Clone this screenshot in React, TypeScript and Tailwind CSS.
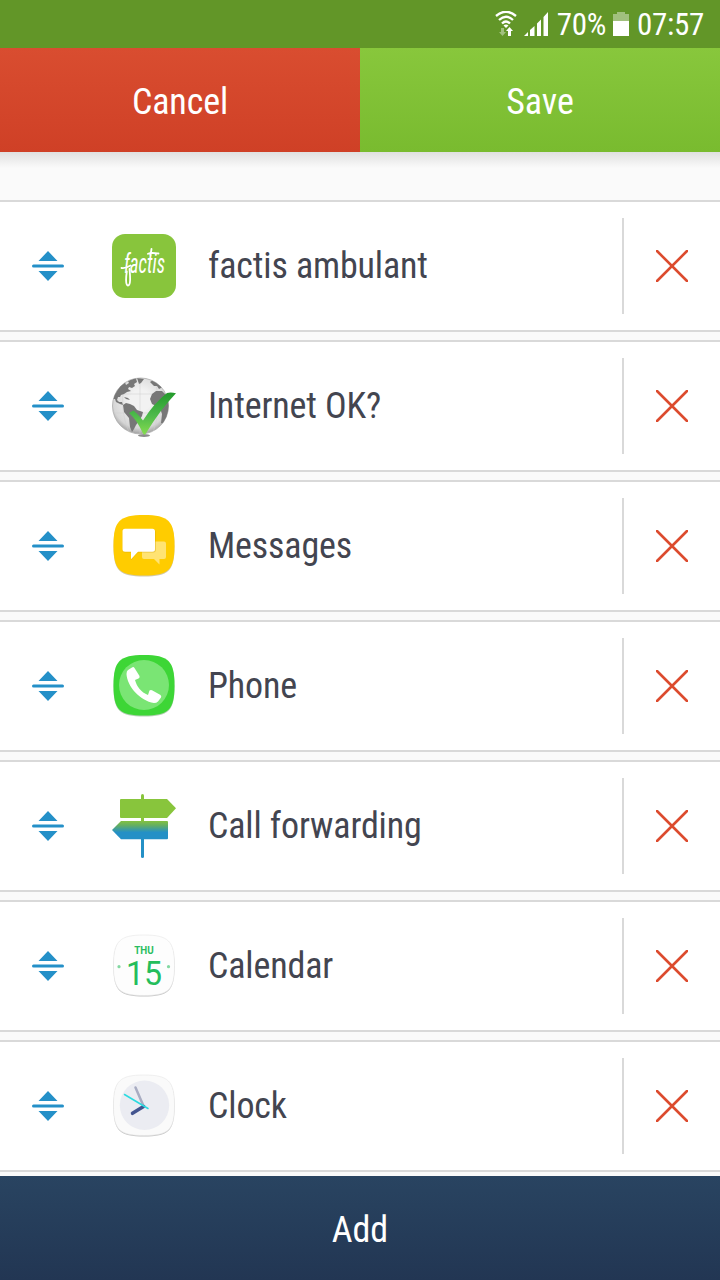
import React from 'react';

interface AppItem {
	label: string;
	icon: React.ReactNode;
}

const SQUIRCLE = 'M32 1C56.500 1 62.500 7 62.500 31.500S56.500 61.500 32 61.500S1.500 56 1.500 31.500S7.500 1 32 1Z';

function FactisIcon() {
	return (
		<svg viewBox="0 0 64 64" className="size-16 overflow-visible">
			<rect width="64" height="64" rx="13" fill="#88c53c" />
			<text
				x="12"
				y="38.500"
				textLength="41"
				lengthAdjust="spacingAndGlyphs"
				fill="#fff"
				className="font-['Roboto_Condensed','Roboto',sans-serif] text-[28px] italic"
			>
				factis
			</text>
			<path
				d="M9.500 34C12 34.500 16 33 18.500 31.500M14.800 37.500C14 43 13.300 51.300 16 51.500C18.800 51.500 18.300 43 17.500 35M36 19.800C40 18 43 19.500 46.500 19.500M39.500 15L38.500 21"
				fill="none"
				stroke="#fff"
				strokeWidth="1.800"
				strokeLinecap="round"
			/>
		</svg>
	);
}

function InternetIcon() {
	return (
		<svg viewBox="0 0 64 64" className="size-16">
			<defs>
				<radialGradient id="globe" cx="0.5" cy="0.4" r="0.62">
					<stop offset="0.3" stopColor="#f2f2f2" />
					<stop offset="0.8" stopColor="#d6d6d6" />
					<stop offset="1" stopColor="#969696" />
				</radialGradient>
				<linearGradient id="tick" x1="0" y1="0" x2="0" y2="1">
					<stop offset="0" stopColor="#239a2c" />
					<stop offset="0.55" stopColor="#4eba4b" />
					<stop offset="1" stopColor="#85dc4e" />
				</linearGradient>
				<clipPath id="globeClip">
					<circle cx="28.500" cy="32" r="28" />
				</clipPath>
			</defs>
			<ellipse cx="32" cy="61.500" rx="6" ry="1.500" fill="#8b8b8b" />
			<circle cx="28.500" cy="32" r="28" fill="url(#globe)" stroke="#aaa" strokeWidth="0.800" />
			<g clipPath="url(#globeClip)">
				<path d="M0 20H57M0 39H57M28 2V60M15 4C8 20 10 43 17 58M42 4C48 20 47 43 41 58" fill="none" stroke="#cfcfcf" strokeWidth="0.500" />
				<g fill="#777">
					<path d="M1 25L4 17L9 11L13 8.500L14 11L17 9L16 7L21 5L24 4.500L25 8L22 10L23 12L20 14L17 13L16 15L19 17L15 18L12 20L9 21L8 23L6 23L5 26L7 28L10 28L11 31L8 30L4 28L3 25Z" />
					<path d="M11 31L14 29L18 30L22 32L25 36L31 38L30 42L27 47L24 51L22 55L20 58L18 53L17 44L12 38Z" />
					<path d="M25 4L32 5L29 9L27 10ZM38 8L41 6L46 8L51 13L47 15L45 12L42 12ZM12 23L16 24L18 26L14 25Z" />
					<path d="M40 20L44 17L50 17L54 21L58 31L56 43L52 50L49 49L50 40L48 34L44 32L40 30L38 25Z" />
				</g>
			</g>
			<path d="M17 39L21.500 36.500Q27 41 31 46.500Q42 29 55 19Q59 18 64 19.300Q48 36 33.500 60Q32.500 61.500 31 59.500Q25 46 17 39Z" fill="url(#tick)" />
		</svg>
	);
}

function MessagesIcon() {
	return (
		<svg viewBox="0 0 64 64" className="size-16">
			<path d={SQUIRCLE} fill="#d0c8ac" transform="translate(0 1)" />
			<path d={SQUIRCLE} fill="#fc0" />
			<path d="M32 27.500H52Q54 27.500 54 29.500V43Q54 45 52 45H47.500V50.500L42 45H32Q30 45 30 43V29.500Q30 27.500 32 27.500Z" fill="#ffe373" />
			<path d="M13 15.500H41Q43.800 15.500 43.800 18V36Q43.800 38.500 41 38.500H26L19 46V38.500H13Q10.500 38.500 10.500 36V18Q10.500 15.500 13 15.500Z" fill="#d9a900" opacity=".5" />
			<path d="M13 14.800H40.500Q43 14.800 43 17.300V35.200Q43 37.700 40.500 37.700H26L19 45.200V37.700H13Q10.500 37.700 10.500 35.200V17.300Q10.500 14.800 13 14.800Z" fill="#fff" />
		</svg>
	);
}

function PhoneIcon() {
	return (
		<svg viewBox="0 0 64 64" className="size-16">
			<path d={SQUIRCLE} fill="#b3ceb3" transform="translate(0 1)" />
			<path d={SQUIRCLE} fill="#3dd636" />
			<circle cx="32" cy="31" r="25" fill="#7ae574" />
			<path d="M16 16L20 13.500Q21.500 12.500 22.500 14L27.500 22Q28 23.500 26.500 24.500L23 26C25 33 29 38 36 41L37.500 36.500Q38.500 35.500 40 36.200L48.500 41Q49.700 42 49 43.500L46 47.500Q44.500 49 42 49C28 47 15 32 14.500 20Q14.500 17 16 16Z" fill="#fff" />
		</svg>
	);
}

function ForwardingIcon() {
	return (
		<svg viewBox="0 0 64 64" className="size-16">
			<defs>
				<linearGradient id="sign" x1="0" y1="0" x2="0" y2="1">
					<stop offset="0" stopColor="#83c140" />
					<stop offset="0.25" stopColor="#63ae64" />
					<stop offset="0.62" stopColor="#2490c6" />
				</linearGradient>
			</defs>
			<path d="M29 1.500Q29 0 30.500 0T32 1.500V27H29Z" fill="#88c53c" />
			<path d="M29 44H32V62.500Q32 64 30.500 64T29 62.500Z" fill="#2490c6" />
			<path d="M9 5H55L64 14.300L55 24H9Q8 24 8 23V6Q8 5 9 5Z" fill="#88c53c" />
			<path d="M9 27H55Q56 27 56 28V44.200Q56 45.200 55 45.200H9L0 36Z" fill="url(#sign)" />
		</svg>
	);
}

function CalendarIcon() {
	return (
		<svg viewBox="0 0 64 64" className="size-16 [font-stretch:100%]">
			<path d={SQUIRCLE} fill="#c4c4c4" transform="translate(0 1)" />
			<path d={SQUIRCLE} fill="#fdfdfd" stroke="#e5e5e5" strokeWidth=".6" />
			<circle cx="7" cy="32.700" r="1.600" fill="#84d8a2" />
			<circle cx="56.500" cy="32.700" r="1.600" fill="#84d8a2" />
			<text x="32" y="20" textAnchor="middle" textLength="19.500" lengthAdjust="spacingAndGlyphs" fill="#2bbd61" className="font-['Roboto',sans-serif] text-[10px] font-bold">THU</text>
			<text x="32" y="51.300" textAnchor="middle" textLength="36" lengthAdjust="spacingAndGlyphs" fill="#24bd5b" className="font-['Roboto',sans-serif] text-[34px]">15</text>
		</svg>
	);
}

function ClockIcon() {
	return (
		<svg viewBox="0 0 64 64" className="size-16">
			<path d={SQUIRCLE} fill="#c4c4c4" transform="translate(0 1)" />
			<path d={SQUIRCLE} fill="#fafafa" stroke="#e5e5e5" strokeWidth=".6" />
			<circle cx="32.500" cy="31.300" r="24.700" fill="#ebecf2" />
			<g fill="none" strokeLinecap="round">
				<path d="M31.500 32L23.500 13.500" stroke="#a8acc2" strokeWidth="2.500" />
				<path d="M31.500 32.500L20.500 39.300" stroke="#43548f" strokeWidth="3.500" />
				<path d="M12.500 20.500L36 34.500" stroke="#2bdbe0" strokeWidth="1.500" />
			</g>
		</svg>
	);
}

const items: AppItem[] = [
	{ label: 'factis ambulant', icon: <FactisIcon /> },
	{ label: 'Internet OK?', icon: <InternetIcon /> },
	{ label: 'Messages', icon: <MessagesIcon /> },
	{ label: 'Phone', icon: <PhoneIcon /> },
	{ label: 'Call forwarding', icon: <ForwardingIcon /> },
	{ label: 'Calendar', icon: <CalendarIcon /> },
	{ label: 'Clock', icon: <ClockIcon /> }
];

function StatusBar() {
	return (
		<div className="flex h-12 shrink-0 items-center justify-end bg-[#629628] pr-4 text-[31px] leading-none tracking-[-0.3px] text-white">
			<svg viewBox="0 0 22 26" className="mr-[7px] h-[26px] w-[22px]" fill="none">
				<path d="M1 5Q11 -3.500 21 5M4 9Q11 2.500 18 9M7 12.500Q11 8.500 15 12.500" stroke="#fff" strokeWidth="2.300" />
				<path d="M8.500 14.500Q11 12.500 13.500 14.500L11 17Z" fill="#fff" />
				<path d="M6 17H9V21H11L7.500 25L4 21H6Z" fill="#a1c07e" />
				<path d="M13 25V20H11L14.500 16L18 20H16V25Z" fill="#fff" />
			</svg>
			<svg viewBox="0 0 24 24" className="mr-[9px] size-6" fill="#fff">
				<path d="M0 24L4 20V24ZM6 18L10.500 14V24H6ZM13 11.500L17 7.500V24H13ZM19.500 5L24 0V24H19.500Z" />
			</svg>
			<span>70%</span>
			<svg viewBox="0 0 16 24" className="ml-[7px] mr-2 h-6 w-4">
				<path d="M0 2H4V0H12V2H16V9H0Z" fill="#a1c07e" />
				<path d="M0 9H16V24H0Z" fill="#fff" />
			</svg>
			<span>07:57</span>
		</div>
	);
}

function Row({ label, icon }: AppItem) {
	return (
		<li className="flex h-[132px] shrink-0 items-center border-y-2 border-[#d9d9d9] bg-white">
			<button className="flex h-full w-24 items-center justify-center" aria-label="Move">
				<svg viewBox="0 0 32 32" className="size-8" fill="#2490c8">
					<path d="M16 1L25.500 11H6.500ZM16 31L6.500 21H25.500Z" />
					<rect y="14.500" width="32" height="3" rx="1.500" />
				</svg>
			</button>
			<div className="ml-4 size-16">{icon}</div>
			<span className="ml-8 flex-1 whitespace-nowrap tracking-[-0.14px] text-[#434550]">{label}</span>
			<button className="flex h-24 w-[98px] items-center justify-center border-l-2 border-[#d9d9d9]" aria-label="Remove">
				<svg viewBox="0 0 32 32" className="size-8" stroke="#dc4b2e" strokeWidth="2.600" strokeLinecap="round">
					<path d="M1 1L31 31M31 1L1 31" />
				</svg>
			</button>
		</li>
	);
}

export default function App() {
	return (
		<div className="flex h-[1280px] w-[720px] flex-col overflow-hidden bg-[#fafafa] font-['Roboto_Condensed','Roboto',sans-serif] text-4xl [font-stretch:75%]">
			<StatusBar />

			{/* Top actions */}
			<div className="grid h-[104px] shrink-0 grid-cols-2 text-white">
				<button className="bg-linear-to-b from-[#d94d30] to-[#cf4026] pt-1 tracking-[-0.14px]">Cancel</button>
				<button className="bg-linear-to-b from-[#88c73c] to-[#79bb2f] pt-1">Save</button>
			</div>
			<div className="h-4 shrink-0 bg-linear-to-b from-[#e0e0e0] to-[#fafafa]" />

			<ul className="mt-8 flex min-h-0 flex-1 flex-col gap-2">
				{items.map((item) => (
					<Row key={item.label} {...item} />
				))}
			</ul>

			<button className="h-[104px] shrink-0 bg-linear-to-b from-[#294461] to-[#223653] pt-1 text-white">Add</button>
		</div>
	);
}
